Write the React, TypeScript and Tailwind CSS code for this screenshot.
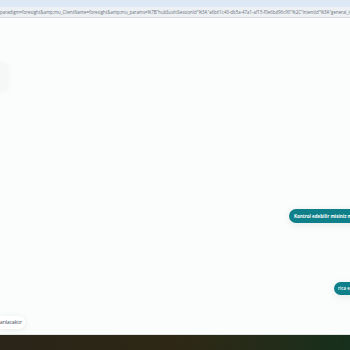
const URL_TEXT =
  'paradigm=foresight&amp;mu_ClientName=foresight&amp;mu_params=%7B"hubSushiSessionId"%3A"a6b61c40-db5a-47a1-af15-f0e6bd96c90"%2C"intentId"%3A"general_inquiry"';

export default function App() {
  return (
    <div
      className="w-[350px] h-[350px] flex flex-col overflow-hidden bg-[#fbfdfd]"
      style={{ fontFamily: '"Open Sans", "Liberation Sans", sans-serif' }}
    >
      {/* browser chrome */}
      <div className="h-[7px] bg-[#dce8f6] shrink-0" />
      <div className="h-[11px] bg-[#eef1f4] border-b border-[#d6dade] shrink-0 flex items-center overflow-hidden">
        <span className="text-[4.4px] leading-none text-[#6b7280] whitespace-nowrap">{URL_TEXT}</span>
      </div>

      {/* chat area */}
      <div className="flex-1 flex flex-col overflow-hidden">
        <div className="h-[44px]" />
        <div className="w-[8px] h-[30px] rounded-r-md bg-[#f6f8f8] shadow-[0_0_6px_rgba(0,0,0,0.04)]" />
        <div className="h-[117px]" />

        <div className="flex pl-[289px]">
          <div className="shrink-0 h-[14px] rounded-full bg-[#0f7f89] pl-[5px] pr-[8px] flex items-center shadow-[0_2px_8px_rgba(0,0,0,0.08)]">
            <span className="text-[4.5px] font-bold text-white whitespace-nowrap">
              Kontrol edebilir misiniz mu
            </span>
          </div>
        </div>

        <div className="h-[59px]" />

        <div className="flex pl-[334px]">
          <div className="shrink-0 h-[13px] rounded-full bg-[#0f7f89] pl-[4px] pr-[8px] flex items-center shadow-[0_2px_8px_rgba(0,0,0,0.08)]">
            <span className="text-[4.5px] font-semibold text-white whitespace-nowrap">rica e</span>
          </div>
        </div>

        <div className="h-[21px]" />

        <div className="flex">
          <div className="h-[13px] bg-white rounded-r-md shadow-[0_1px_6px_rgba(0,0,0,0.08)] pr-[3px] flex items-center">
            <span className="text-[4.8px] text-[#374151] whitespace-nowrap">arılacaktır</span>
          </div>
        </div>
      </div>

      {/* taskbar */}
      <div className="h-[16px] shrink-0 border-t border-[#e2e5e7] bg-gradient-to-r from-[#2a2519] via-[#2e2715] to-[#15301c]" />
    </div>
  );
}
